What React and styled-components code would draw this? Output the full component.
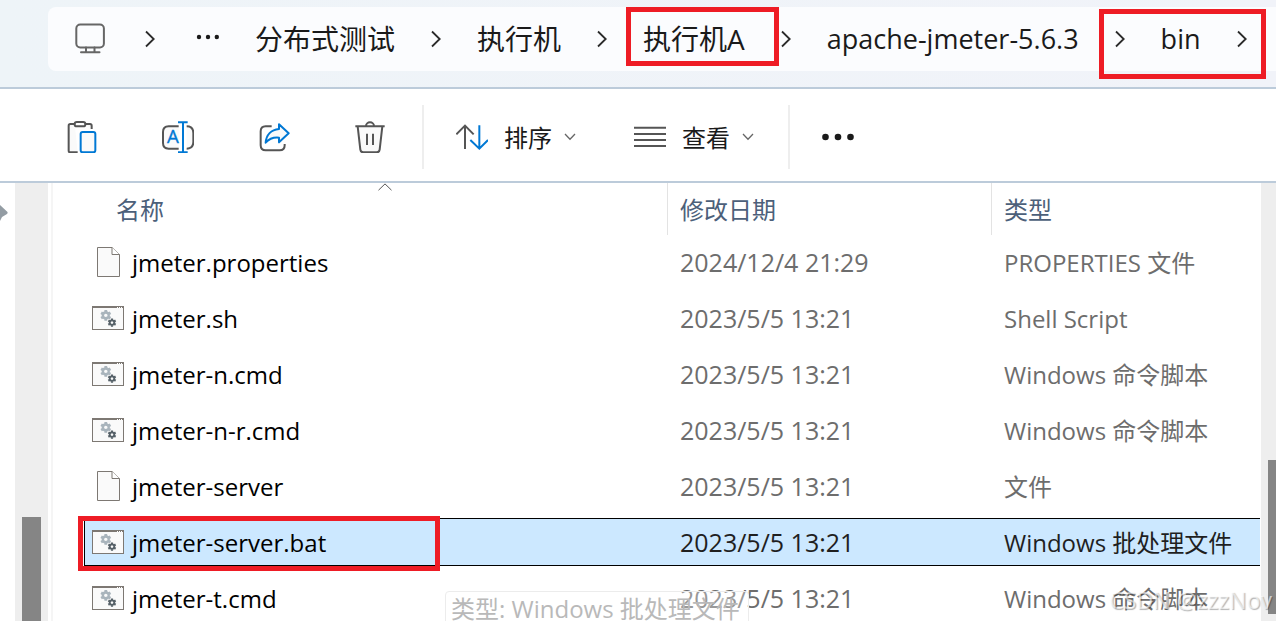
import React from 'react';
import styled, { createGlobalStyle } from 'styled-components';

const files = [
  { name: 'jmeter.properties', date: '2024/12/4 21:29', type: 'PROPERTIES 文件', icon: 'doc' },
  { name: 'jmeter.sh', date: '2023/5/5 13:21', type: 'Shell Script', icon: 'script' },
  { name: 'jmeter-n.cmd', date: '2023/5/5 13:21', type: 'Windows 命令脚本', icon: 'script' },
  { name: 'jmeter-n-r.cmd', date: '2023/5/5 13:21', type: 'Windows 命令脚本', icon: 'script' },
  { name: 'jmeter-server', date: '2023/5/5 13:21', type: '文件', icon: 'doc' },
  { name: 'jmeter-server.bat', date: '2023/5/5 13:21', type: 'Windows 批处理文件', icon: 'script', selected: true },
  { name: 'jmeter-t.cmd', date: '2023/5/5 13:21', type: 'Windows 命令脚本', icon: 'script' },
];

const App = () => {
  return (
    <>
      <GlobalStyle />

      <Window>
        <AddressArea>
          <AddressBar aria-label="路径">
            <CrumbButton aria-label="此电脑">
              <MonitorIcon />
            </CrumbButton>
            <ChevronRight />
            <CrumbButton aria-label="更多路径">
              <PathDots />
            </CrumbButton>
            <CrumbButton>分布式测试</CrumbButton>
            <ChevronRight />
            <CrumbButton>执行机</CrumbButton>
            <ChevronRight />
            <Marked>
              <CrumbButton>执行机A</CrumbButton>
              <CrumbFrame />
            </Marked>
            <ChevronRight />
            <LatinCrumb>apache-jmeter-5.6.3</LatinCrumb>
            <Marked>
              <ChevronRight />
              <LatinCrumb>bin</LatinCrumb>
              <ChevronRight />
              <BinFrame />
            </Marked>
          </AddressBar>
        </AddressArea>

        <Toolbar>
          <IconGroup>
            <ToolButton aria-label="粘贴">
              <PasteIcon />
            </ToolButton>
            <ToolButton aria-label="重命名">
              <RenameIcon />
            </ToolButton>
            <ToolButton aria-label="共享">
              <ShareIcon />
            </ToolButton>
            <ToolButton aria-label="删除">
              <TrashIcon />
            </ToolButton>
          </IconGroup>
          <MenuGroup>
            <ToolButton>
              <SortIcon />
              <ToolLabel>排序</ToolLabel>
              <ChevronDown />
            </ToolButton>
            <ToolButton>
              <LinesIcon />
              <ToolLabel>查看</ToolLabel>
              <ChevronDown />
            </ToolButton>
          </MenuGroup>
          <ToolButton aria-label="更多">
            <MoreIcon />
          </ToolButton>
        </Toolbar>

        <Content>
          <NavPane>
            <PinIcon />
          </NavPane>
          <NavScroll>
            <NavThumb />
          </NavScroll>

          <FilePane>
            <FileTable>
              <colgroup>
                <col />
                <DateCol />
                <TypeCol />
              </colgroup>
              <thead>
                <tr>
                  <HeadCell>
                    <NameHead>
                      名称
                      <SortMark />
                    </NameHead>
                  </HeadCell>
                  <HeadCell $divider>修改日期</HeadCell>
                  <HeadCell $divider>类型</HeadCell>
                </tr>
              </thead>
              <tbody>
                {files.map((file) => (
                  <tr key={file.name} aria-selected={!!file.selected}>
                    <Cell>
                      <NameBox $selected={file.selected}>
                        <IconSlot>{file.icon === 'doc' ? <DocIcon /> : <ScriptIcon />}</IconSlot>
                        <RowText>{file.name}</RowText>
                      </NameBox>
                      {file.selected && <RowFrame />}
                    </Cell>
                    <Cell>
                      <DateBox $selected={file.selected}>{file.date}</DateBox>
                    </Cell>
                    <Cell>
                      <InfoBox $selected={file.selected}>
                        <RowText>{file.type}</RowText>
                      </InfoBox>
                    </Cell>
                  </tr>
                ))}
              </tbody>
            </FileTable>
            <Tooltip>类型: Windows 批处理文件</Tooltip>
          </FilePane>

          <FileScroll>
            <FileThumb />
          </FileScroll>
          <Watermark>CSDN @zzzNov</Watermark>
        </Content>
      </Window>
    </>
  );
};

export default App;

/* icons */

const MonitorIcon = () => (
  <svg width="36" height="32" viewBox="0 0 36 32" fill="none" stroke="#666" strokeWidth="2">
    <rect x="3.3" y="1.5" width="27.6" height="23" rx="4" />
    <path d="M13 24.5v4.5M21.5 24.5v4.5M8 29.2h18.5" strokeLinecap="round" />
  </svg>
);

const ChevronRight = () => (
  <svg width="10" height="18" viewBox="0 0 10 18" fill="none" stroke="#2a2a2a" strokeWidth="1.8">
    <path d="M1 1.5 8.7 9 1 16.5" />
  </svg>
);

const ChevronDown = () => (
  <svg width="12" height="8" viewBox="0 0 12 8" fill="none" stroke="#666" strokeWidth="1.3">
    <path d="M1 1 6 6.2 11 1" />
  </svg>
);

const PathDots = () => (
  <svg width="28" height="12" viewBox="0 0 28 12" fill="#1a1a1a">
    <circle cx="8" cy="4" r="2.2" />
    <circle cx="17" cy="4" r="2.2" />
    <circle cx="25.8" cy="4" r="2.2" />
  </svg>
);

const MoreIcon = () => (
  <svg width="34" height="8" viewBox="0 0 34 8" fill="#1a1a1a">
    <circle cx="3.5" cy="4" r="3.3" />
    <circle cx="16" cy="4" r="3.3" />
    <circle cx="28.5" cy="4" r="3.3" />
  </svg>
);

const PasteIcon = () => (
  <ToolSvg viewBox="0 0 96 96">
    <path d="M35 94H13q-5 0-5-5V14q0-5 5-5h13M58 9h14q5 0 5 5v10" fill="#fafafa" />
    <rect x="26" y="3" width="32" height="13" rx="6.5" />
    <rect x="44" y="33" width="44" height="61" rx="6" stroke="#0078d4" fill="#fafafa" />
  </ToolSvg>
);

const RenameIcon = () => (
  <ToolSvg viewBox="0 0 96 96">
    <path d="M50 16H20Q3 16 3 33V66Q3 83 20 83H50M74 16Q94 16 94 36V63Q94 83 74 83" fill="#fafafa" />
    <path d="M63 4V93M48 3.5H77M48 93.5H77" stroke="#0078d4" />
    <text x="32.5" y="66" textAnchor="middle" fontFamily="Open Sans" fontSize="56" fill="#0078d4" stroke="#0078d4" strokeWidth="1">
      A
    </text>
  </ToolSvg>
);

const ShareIcon = () => (
  <ToolSvg viewBox="0 0 96 96">
    <path d="M41 16H23Q8 16 8 31V73Q8 88 23 88H65Q80 88 80 73V69" />
    <path d="M63 10 92 37 63 64V50C45 48 33 54 23 65C25 42 39 26 63 24Z" stroke="#0078d4" strokeLinejoin="round" fill="#fafafa" />
  </ToolSvg>
);

const TrashIcon = () => (
  <ToolSvg viewBox="0 0 96 96">
    <path d="M11 16 19 86Q20 94 28 94H68Q76 94 77 86L85 16" fill="#fafafa" />
    <path d="M4 16H92M36 15a12 11 0 0 1 24 0M39 38V72M57 38V72" />
  </ToolSvg>
);

const SortIcon = () => (
  <ToolSvg viewBox="0 0 96 96">
    <path d="M27 84V14M1 40 27 14 53 40" />
    <path d="M70 13V83M43 57 70 83 96 57" stroke="#0078d4" />
  </ToolSvg>
);

const LinesIcon = () => (
  <ToolSvg viewBox="0 0 96 96">
    <path d="M0 20H96M0 39H96M0 57H96M0 75H96" />
  </ToolSvg>
);

const PinIcon = () => (
  <svg width="8" height="16" viewBox="0 0 8 16" fill="#939ca3">
    <path d="M0 0 7.5 7Q8 8 7 9L2 12 0 16Z" />
  </svg>
);

const DocIcon = () => (
  <svg width="24" height="30" viewBox="0 0 24 30" fill="#fafafa" stroke="#7d7873">
    <path d="M1.5 .5H16L23.5 7.5V29.5H1.5Z" />
    <path d="M16 .5V7.5H23.5" fill="#fff" />
  </svg>
);

const teeth = [0, 60, 120];

const Gear = ({ x, y, size, color }) => (
  <g transform={`translate(${x} ${y}) scale(${size})`} stroke={color} fill="none">
    <circle r="2.9" strokeWidth="2.4" />
    {teeth.map((angle) => (
      <path key={angle} d="M0-5.4V-3.4M0 3.4V5.4" strokeWidth="2.8" transform={`rotate(${angle})`} />
    ))}
  </g>
);

const ScriptIcon = () => (
  <svg width="32" height="24" viewBox="0 0 32 24">
    <rect x=".5" y=".5" width="31" height="23" fill="#fafafa" stroke="#7d7873" />
    <path d="M0 1H32" stroke="#7d7873" strokeWidth="2" />
    <path d="M25 1.5H31" stroke="#fff" strokeDasharray="1 1" />
    <Gear x={13.8} y={9.4} size={1} color="#a9b4bc" />
    <Gear x={20} y={16.6} size={0.78} color="#566168" />
  </svg>
);

const SortMark = () => (
  <SortMarkSvg width="14" height="8" viewBox="0 0 14 8" fill="none" stroke="#555">
    <path d="M.5 7.2 7 .9 13.5 7.2" />
  </SortMarkSvg>
);

/* styles */

const GlobalStyle = createGlobalStyle`
  * {
    box-sizing: border-box;
  }

  body {
    margin: 0;
    background: #fff;
    font-family: 'Open Sans', 'Noto Sans CJK SC', sans-serif;
    font-size: 24px;
  }

  button {
    border: 0;
    padding: 0;
    background: none;
    font: inherit;
    color: inherit;
    cursor: pointer;
  }

  svg {
    display: block;
    flex: none;
  }
`;

const Window = styled.div`
  display: flex;
  flex-direction: column;
  height: 100vh;
  overflow: hidden;
`;

const AddressArea = styled.header`
  flex: none;
  padding: 7px 0 16px 48px;
  background: linear-gradient(90deg, #eef4f8, #f1f3f9);
  border-bottom: 2px solid #bccbda;
`;

const AddressBar = styled.nav`
  display: flex;
  align-items: center;
  gap: 36px;
  height: 64px;
  padding-left: 25px;
  border-radius: 8px 0 0 8px;
  background: #fbfcfe;
  color: #1a1a1a;
  font-size: 28px;
  white-space: nowrap;
`;

const CrumbButton = styled.button`
  display: flex;
  align-items: center;
  line-height: 40px;
`;

const LatinCrumb = styled(CrumbButton)`
  font-size: 27px;
`;

const Marked = styled.span`
  position: relative;
  display: flex;
  align-items: center;
  gap: 36px;
`;

const Frame = styled.span`
  position: absolute;
  border: 5px solid #ee1c25;
  pointer-events: none;
`;

const CrumbFrame = styled(Frame)`
  inset: -12px -34px -7px -17px;
`;

const BinFrame = styled(Frame)`
  inset: -10px -19px -20px -16px;
`;

const Toolbar = styled.div`
  display: flex;
  align-items: center;
  flex: none;
  height: 94px;
  padding: 4px 0 0 66px;
  border-bottom: 2px solid #bccbda;
  color: #1a1a1a;
`;

const IconGroup = styled.div`
  display: flex;
  align-items: center;
  gap: 64px;
  height: 64px;
  padding-right: 36px;
  margin-right: 32px;
  border-right: 2px solid #eee;
`;

const MenuGroup = styled(IconGroup)`
  gap: 58px;
  padding-right: 34px;
`;

const ToolButton = styled.button`
  display: flex;
  align-items: center;
  line-height: 32px;
`;

const ToolLabel = styled.span`
  padding: 2px 12px 0 16px;
`;

const ToolSvg = styled.svg`
  width: 32px;
  height: 32px;
  fill: none;
  stroke: #555;
  stroke-width: 6;
`;

const Content = styled.main`
  position: relative;
  display: flex;
  flex: 1;
  min-height: 0;
`;

const NavPane = styled.div`
  flex: none;
  width: 15px;
  padding-top: 22px;
`;

const NavScroll = styled.div`
  display: flex;
  flex-direction: column;
  justify-content: flex-end;
  flex: none;
  width: 33px;
  padding: 0 7px;
  background: #eee;
`;

const NavThumb = styled.div`
  height: 104px;
  background: #858585;
`;

const FilePane = styled.section`
  position: relative;
  flex: 1;
  min-width: 0;
  margin: 0 1px 0 3px;
  padding-left: 31px;
  border-left: 2px solid #f5f5f5;
`;

const FileTable = styled.table`
  width: 100%;
  table-layout: fixed;
  border-collapse: collapse;
`;

const DateCol = styled.col`
  width: 324px;
`;

const TypeCol = styled.col`
  width: 269px;
`;

const HeadCell = styled.th`
  height: 52px;
  padding: 2px 0 0 ${({ $divider }) => ($divider ? '13px' : '19px')};
  box-shadow: ${({ $divider }) => ($divider ? 'inset 1px 0 #e3e3e3' : 'none')};
  color: #4c607a;
  font-weight: 400;
  line-height: 50px;
  text-align: left;
`;

const NameHead = styled.div`
  position: relative;
  padding-left: 13px;
`;

const SortMarkSvg = styled.svg`
  position: absolute;
  top: -2px;
  left: 50%;
  transform: translateX(-50%);
`;

const Cell = styled.td`
  position: relative;
  height: 56px;
  padding: 3px 0 5px;
`;

const RowBox = styled.div`
  display: flex;
  align-items: center;
  height: 48px;
  border: 1px solid ${({ $selected }) => ($selected ? '#000' : 'transparent')};
  border-width: 1px 0;
  background: ${({ $selected }) => ($selected ? '#cce8ff' : 'transparent')};
  line-height: 32px;
  white-space: nowrap;
`;

const RowText = styled.span`
  padding-top: 2px;
`;

const NameBox = styled(RowBox)`
  gap: 8px;
  padding-left: 7px;
  border-left-width: 1px;
  color: #000;
`;

const InfoBox = styled(RowBox)`
  padding-left: 13px;
  color: ${({ $selected }) => ($selected ? '#1f1f1f' : '#6d6d6d')};
`;

const DateBox = styled(InfoBox)`
  font-size: 25px;
`;

const IconSlot = styled.span`
  display: flex;
  justify-content: center;
  width: 32px;
`;

const RowFrame = styled(Frame)`
  top: 1px;
  left: -6px;
  width: 362px;
  height: 55px;
`;

const Tooltip = styled.div`
  position: absolute;
  top: 408px;
  left: 392px;
  padding: 0 8px 0 5px;
  border: 1px solid #ececec;
  border-radius: 4px;
  background: rgba(255, 255, 255, 0.3);
  color: #b9b9b9;
  line-height: 34px;
  white-space: nowrap;
`;

const FileScroll = styled.div`
  flex: none;
  width: 15px;
  padding: 277px 0 7px 7px;
  background: #eee;
`;

const FileThumb = styled.div`
  height: 100%;
  background: #858585;
`;

const Watermark = styled.div`
  position: absolute;
  right: 4px;
  bottom: 4px;
  color: rgba(255, 255, 255, 0.6);
  font-size: 23px;
  line-height: 34px;
  text-shadow: 1px 1px 1px rgba(0, 0, 0, 0.3);
`;
